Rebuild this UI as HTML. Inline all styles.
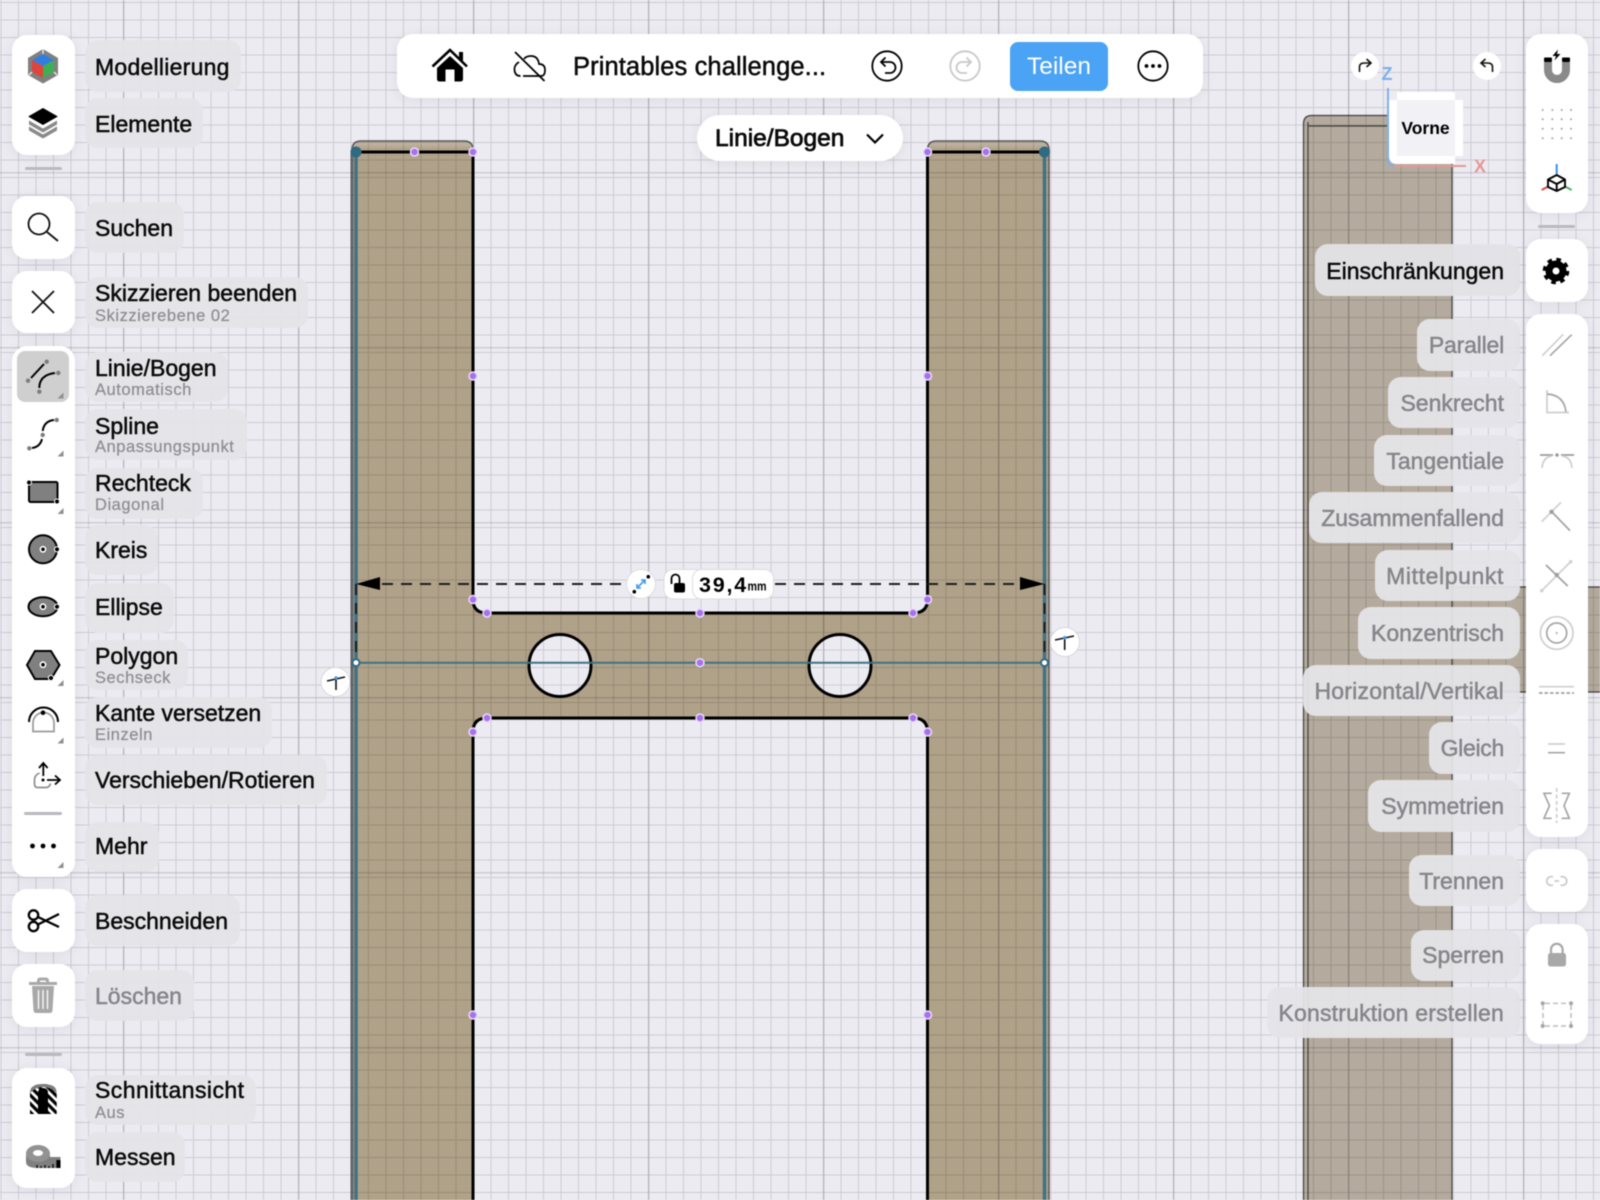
<!DOCTYPE html>
<html lang="de"><head><meta charset="utf-8"><title>Skizze</title>
<style>
html,body{margin:0;padding:0;background:#ecebf2}
body{position:relative;width:1600px;height:1200px;overflow:hidden;font-family:"Liberation Sans",sans-serif;color:#000;filter:blur(.4px)}
svg{position:absolute;left:0;top:0}
.p{position:absolute;background:#fff;border-radius:15px;box-shadow:0 2px 14px rgba(0,0,0,.07)}
.l{position:absolute;background:rgba(228,228,232,.94);border-radius:13px}
.sep{position:absolute;height:3px;background:#b9b9be;border-radius:2px}
.t{position:absolute;height:26px;line-height:26px;font-size:23px;white-space:nowrap;-webkit-text-stroke:.5px currentColor;color:#0a0a0a}
.s{position:absolute;height:20px;line-height:20px;font-size:16.500px;letter-spacing:.55px;white-space:nowrap;color:#8e8e93;-webkit-text-stroke:.25px currentColor}
.g{color:#85858b}
.r{right:96px}
</style></head><body>

<svg width="1600" height="1200" viewBox="0 0 1600 1200">
<defs>
<pattern id="gm" patternUnits="userSpaceOnUse" x="18" y="19.5" width="17.5" height="17.5"><path d="M.5 0V17.5M0 .5H17.5" stroke="#000" stroke-opacity=".135" stroke-width="1" fill="none"/></pattern>
<pattern id="gM" patternUnits="userSpaceOnUse" x="123" y="172" width="175" height="175"><path d="M.75 0V175M0 .75H175" stroke="#000" stroke-opacity=".13" stroke-width="1.500" fill="none"/></pattern>
<linearGradient id="tb" x1="0" y1="0" x2="0" y2="1"><stop offset="0" stop-color="#c4bba9"/><stop offset="1" stop-color="#a99b83"/></linearGradient>
</defs>
<rect width="1600" height="1200" fill="#ecebf2"/>
<!-- right background body -->
<path d="M1303 1200V124q0-9 9-9H1452V587H1600V692H1452V1200Z" fill="#b4ab9e"/>
<path d="M1452 126H1308M1308 1200V122M1303.500 1200V124q0-8.500 8-8.500H1400M1452 126V1200M1452 587H1600M1452 692H1600" stroke="#3f3f3f" stroke-width="1.200" fill="none"/>
<!-- main part -->
<path fill-rule="evenodd" fill="#b0a189" d="M352 1200V150q0-9 9-9H464q9 0 9 9V599.500Q473 613 487 613H913Q927.500 613 927.500 599.500V150q0-9 9-9H1040q9 0 9 9V1200H927.500V732Q927.500 718 913 718H487Q473 718 473 732V1200ZM591 665.500a31 31 0 1 0-62 0a31 31 0 1 0 62 0ZM871 665.500a31 31 0 1 0-62 0a31 31 0 1 0 62 0Z"/>
<path fill="url(#tb)" d="M352 152V150q0-9 9-9H464q9 0 9 9V152ZM927.500 152V150q0-9 9-9H1040q9 0 9 9V152Z"/>
<path d="M352 1200V150q0-9 9-9H464q9 0 9 9M927.500 150q0-9 9-9H1040q9 0 9 9V1200" stroke="#5a5a5c" stroke-width="1.500" fill="none"/>
<path d="M352 1200V150" stroke="#6a6a6e" stroke-width="3" fill="none"/>
<!-- grid -->
<rect width="1600" height="1200" fill="url(#gm)"/>
<rect width="1600" height="1200" fill="url(#gM)"/>
<!-- sketch -->
<g fill="none" stroke="#000" stroke-width="3">
<path d="M356 152H473V599.500Q473 613 487 613H913Q927.500 613 927.500 599.500V152H1044"/>
<path d="M473 1200V732Q473 718 487 718H913Q927.500 718 927.500 732V1200"/>
<circle cx="560" cy="665.500" r="31"/><circle cx="840" cy="665.500" r="31"/>
</g>
<g stroke="#3f7284" fill="none">
<path d="M356 152V1200M1044.500 152V1200" stroke-width="3.500"/>
<path d="M356 662.700H1044.500" stroke-width="2"/>
</g>
<circle cx="356" cy="152" r="5.500" fill="#2f6a80"/><circle cx="1044.500" cy="152" r="5.500" fill="#2f6a80"/>
<!-- dimension -->
<g stroke="#1d1d1d" stroke-width="2" fill="none" stroke-dasharray="11 8">
<path d="M382 584H628"/><path d="M775 584H1020"/>
<path d="M356 584V662"/><path d="M1044.500 584V662"/>
</g>
<path d="M356 584L380 577V590Z M1044.500 584L1020 577V590Z" fill="#000"/>
<!-- dots -->
<g fill="#a970ee" stroke="#e6dcf8" stroke-width="1.500">
<circle cx="414.500" cy="152" r="4"/><circle cx="473" cy="152" r="4"/><circle cx="927.500" cy="152" r="4"/><circle cx="986" cy="152" r="4"/>
<circle cx="473" cy="376" r="4"/><circle cx="927.500" cy="376" r="4"/><circle cx="473" cy="1015" r="4"/><circle cx="927.500" cy="1015" r="4"/>
<circle cx="473" cy="599.500" r="4"/><circle cx="487" cy="613" r="4"/><circle cx="700" cy="613" r="4"/><circle cx="913" cy="613" r="4"/><circle cx="927.500" cy="599.500" r="4"/>
<circle cx="700" cy="662.700" r="4"/>
<circle cx="473" cy="732" r="4"/><circle cx="487" cy="718" r="4"/><circle cx="700" cy="718" r="4"/><circle cx="913" cy="718" r="4"/><circle cx="927.500" cy="732" r="4"/>
</g>
<circle cx="356" cy="662.700" r="3.500" fill="#fff" stroke="#2f6a80" stroke-width="2"/>
<circle cx="1044.500" cy="662.700" r="3.500" fill="#fff" stroke="#2f6a80" stroke-width="2"/>
<!-- T buttons -->
<g fill="#fff" stroke="#d8d8dc" stroke-width="1"><circle cx="335.500" cy="682" r="14.500"/><circle cx="1065" cy="642" r="14.500"/></g>
<g stroke="#111" stroke-width="1.600" fill="none"><path d="M327 681L345 677M336 679V690"/><path d="M1055 640L1074 636M1064.700 638V650"/></g>
<circle cx="336" cy="678" r="1.700" fill="#3d9af0"/><circle cx="1064.700" cy="637.700" r="1.700" fill="#3d9af0"/>
<!-- dim pills -->
<circle cx="641" cy="584" r="14.500" fill="#fff" stroke="#dcdce0"/>
<circle cx="634.300" cy="591.700" r="1.800"/><circle cx="648.300" cy="576.700" r="1.800"/>
<path d="M637 588L645 580M641 580h4v4M637 584v4h4" stroke="#3d9af0" stroke-width="1.600" fill="none"/>
<rect x="664" y="569.500" width="40" height="29.500" rx="9" fill="#fff" stroke="#dcdce0"/>
<rect x="692.500" y="569.500" width="81" height="29.500" rx="9" fill="#fff" stroke="#dcdce0"/>
<rect x="674" y="583" width="11" height="9.500" rx="2" fill="#000"/>
<path d="M671.500 584V578.500a4 4 0 0 1 8 0V583" stroke="#000" stroke-width="1.800" fill="none"/>
<text x="699" y="592" font-family="Liberation Sans" font-weight="700" font-size="21.500" letter-spacing="1.800">39,4</text>
<text x="747.500" y="590.500" font-family="Liberation Sans" font-weight="700" font-size="13" textLength="19" lengthAdjust="spacingAndGlyphs">mm</text>
<!-- view cube -->
<path d="M1388 88V160q0 6 6 6H1466" stroke="#7fb0ea" stroke-width="2" fill="none"/>
<path d="M1394 166H1466" stroke="#e29a96" stroke-width="2" fill="none"/>
<path d="M1397 92H1455V100H1463V156H1455V164H1397q-8 0-8-8V100H1397Z" fill="#fff"/>
<rect x="1397" y="100" width="58" height="56" fill="#f1f1f6"/>
<text x="1425.500" y="134" text-anchor="middle" font-family="Liberation Sans" font-weight="700" font-size="17.500">Vorne</text>
<text x="1387" y="80" text-anchor="middle" font-family="Liberation Sans" font-weight="700" font-size="18" fill="#7fb0ea">Z</text>
<text x="1480" y="172.500" text-anchor="middle" font-family="Liberation Sans" font-weight="700" font-size="18" fill="#e49a96">X</text>
<circle cx="1365" cy="66" r="14" fill="#fff"/><circle cx="1487" cy="66" r="14" fill="#fff"/>
<path d="M1359.500 72V67q0-4 5-4h6M1366.500 59l4.500 4-4.500 4" stroke="#111" stroke-width="1.600" fill="none"/>
<path d="M1492.500 72V67q0-4-5-4h-6M1485.500 59l-4.500 4 4.500 4" stroke="#111" stroke-width="1.600" fill="none"/>
</svg>

<!-- left pills -->
<div class="l" style="left:85px;top:40px;width:156px;height:52px"></div>
<div class="l" style="left:85px;top:98px;width:118px;height:50px"></div>
<div class="l" style="left:85px;top:202px;width:99px;height:51px"></div>
<div class="l" style="left:85px;top:277px;width:223px;height:51px"></div>
<div class="l" style="left:85px;top:352px;width:143px;height:50px"></div>
<div class="l" style="left:85px;top:409px;width:162px;height:51px"></div>
<div class="l" style="left:85px;top:468px;width:118px;height:51px"></div>
<div class="l" style="left:85px;top:525px;width:73px;height:50px"></div>
<div class="l" style="left:85px;top:583px;width:89px;height:50px"></div>
<div class="l" style="left:85px;top:640px;width:103px;height:50px"></div>
<div class="l" style="left:85px;top:697px;width:187px;height:51px"></div>
<div class="l" style="left:85px;top:755px;width:242px;height:50px"></div>
<div class="l" style="left:85px;top:822px;width:74px;height:50px"></div>
<div class="l" style="left:85px;top:895px;width:155px;height:51px"></div>
<div class="l" style="left:85px;top:970px;width:109px;height:51px"></div>
<div class="l" style="left:85px;top:1075px;width:171px;height:50px"></div>
<div class="l" style="left:85px;top:1132px;width:100px;height:50px"></div>
<!-- right pills -->
<div class="l" style="left:1315px;top:244px;width:205px;height:52px;background:rgba(226,226,230,.96)"></div>
<div class="l" style="left:1417px;top:319px;width:103px;height:52px"></div>
<div class="l" style="left:1388px;top:377px;width:132px;height:51px"></div>
<div class="l" style="left:1374px;top:435px;width:146px;height:51px"></div>
<div class="l" style="left:1309px;top:492px;width:211px;height:51px"></div>
<div class="l" style="left:1375px;top:550px;width:145px;height:51px"></div>
<div class="l" style="left:1358px;top:607px;width:162px;height:52px"></div>
<div class="l" style="left:1303px;top:665px;width:217px;height:51px"></div>
<div class="l" style="left:1429px;top:722px;width:91px;height:52px"></div>
<div class="l" style="left:1368px;top:780px;width:152px;height:52px"></div>
<div class="l" style="left:1409px;top:855px;width:111px;height:51px"></div>
<div class="l" style="left:1411px;top:930px;width:109px;height:51px"></div>
<div class="l" style="left:1267px;top:987px;width:253px;height:51px"></div>

<!-- panels -->
<div class="p" style="left:12px;top:35px;width:63px;height:120px"></div>
<div class="sep" style="left:25px;top:167px;width:37px"></div>
<div class="p" style="left:12px;top:196px;width:63px;height:63px"></div>
<div class="p" style="left:12px;top:271px;width:63px;height:62px"></div>
<div class="p" style="left:12px;top:346px;width:63px;height:531px"></div>
<div style="position:absolute;left:17px;top:351px;width:52px;height:51px;background:#cfcfcf;border-radius:8px"></div>
<div class="sep" style="left:24px;top:812px;width:38px"></div>
<div class="p" style="left:12px;top:889px;width:63px;height:63px"></div>
<div class="p" style="left:12px;top:964px;width:63px;height:63px"></div>
<div class="sep" style="left:25px;top:1053px;width:37px"></div>
<div class="p" style="left:12px;top:1068px;width:63px;height:120px"></div>

<div class="p" style="left:1526px;top:34px;width:62px;height:179px"></div>
<div class="sep" style="left:1538px;top:225px;width:37px"></div>
<div class="p" style="left:1526px;top:239px;width:62px;height:63px"></div>
<div class="p" style="left:1526px;top:314px;width:62px;height:523px"></div>
<div class="p" style="left:1526px;top:849px;width:62px;height:63px"></div>
<div class="p" style="left:1526px;top:924px;width:62px;height:120px"></div>

<!-- top bar -->
<div class="p" style="left:397px;top:34px;width:806px;height:64px;border-radius:16px"></div>
<div style="position:absolute;left:1010px;top:42px;width:98px;height:49px;background:#4aa3f5;border-radius:8px;color:#fff;font-size:24.500px;line-height:50px;text-align:center">Teilen</div>
<div class="t" style="left:573px;top:54px;font-size:25.500px;letter-spacing:.1px">Printables challenge...</div>
<div class="p" style="left:697px;top:115px;width:206px;height:46px;border-radius:23px"></div>
<div class="t" style="left:715px;top:126px;font-size:24.500px;-webkit-text-stroke:.75px #0a0a0a">Linie/Bogen</div>

<!-- icons -->
<svg width="1600" height="1200" viewBox="0 0 1600 1200">
<defs>
<pattern id="st" patternUnits="userSpaceOnUse" width="6" height="6" patternTransform="rotate(45 43 1100)"><rect width="6" height="6" fill="#fff"/><rect width="6" height="3.200" fill="#000"/></pattern>
</defs>
<!-- Modellierung -->
<path d="M43 49L58 58V75L43 83.500L28 75V58Z" fill="#808080"/>
<path d="M43 54L54 60L43 66L32 60Z" fill="#2f7fe2"/><path d="M32 60L43 66V78L32 72Z" fill="#e0443a"/><path d="M54 60L43 66V78L54 72Z" fill="#3fae55"/>
<path d="M43 54V49M32 72L29 75M54 72L57 75" stroke="#eee" stroke-width="1.300"/>
<!-- Elemente -->
<path d="M43 108.500L57 116.500L43 124.500L29 116.500Z" fill="#000" stroke="#000" stroke-linejoin="round"/>
<path d="M29 120.500L43 128.500L57 120.500V124.500L43 132.500L29 124.500ZM29 126.500L43 134.500L57 126.500V130.500L43 138.500L29 130.500Z" fill="#8a8a8a"/>
<!-- Suchen -->
<circle cx="39" cy="224" r="10.500" fill="none" stroke="#111" stroke-width="1.800"/><path d="M47 232L58 241" stroke="#111" stroke-width="1.800"/>
<!-- X -->
<path d="M32 291L54 313M54 291L32 313" stroke="#111" stroke-width="1.800"/>
<!-- corner triangles -->
<g fill="#8f8f8f"><path d="M63.500 392.500V398.500H57.500Z"/><path d="M63.500 450.500V456.500H57.500Z"/><path d="M63.500 508V514H57.500Z"/><path d="M63.500 680V686H57.500Z"/><path d="M63.500 737.500V743.500H57.500Z"/><path d="M63.500 862V868H57.500Z"/></g>
<!-- Linie -->
<path d="M31 378L44 364M39.300 388Q39.300 375 55 373" stroke="#000" stroke-width="2" fill="none"/>
<g fill="#7d7d7d"><circle cx="46.700" cy="361.700" r="2.200"/><circle cx="28" cy="380.700" r="2.200"/><circle cx="58.300" cy="373" r="2.200"/><circle cx="39.300" cy="391.700" r="2.200"/></g>
<!-- Spline -->
<path d="M42.700 431Q44 421 54 420M42 439Q40 447 32 448" stroke="#000" stroke-width="2" fill="none"/>
<g fill="#7d7d7d"><circle cx="56.700" cy="420" r="2.200"/><circle cx="42.700" cy="435" r="2.200"/><circle cx="29.300" cy="448.300" r="2.200"/></g>
<!-- Rechteck -->
<rect x="29" y="482" width="28.500" height="20" rx="1.500" fill="#808080" stroke="#000" stroke-width="2"/>
<circle cx="29" cy="482.500" r="2.500" fill="#000" stroke="#fff"/><circle cx="57" cy="501.500" r="2.500" fill="#000" stroke="#fff"/>
<!-- Kreis -->
<circle cx="43" cy="549.300" r="14" fill="#808080" stroke="#000" stroke-width="2"/>
<circle cx="43" cy="549.300" r="2.600" fill="#000" stroke="#fff" stroke-width="1.600"/><circle cx="57" cy="549.300" r="2.600" fill="#000" stroke="#fff"/>
<!-- Ellipse -->
<ellipse cx="43" cy="606.700" rx="14.500" ry="9.500" fill="#808080" stroke="#000" stroke-width="2"/>
<circle cx="43" cy="606.700" r="2.600" fill="#000" stroke="#fff" stroke-width="1.600"/><circle cx="57" cy="606.700" r="2.600" fill="#000" stroke="#fff"/>
<!-- Polygon -->
<path d="M35 651H51L59.500 665L51 679H35L27 665Z" fill="#808080" stroke="#000" stroke-width="2"/>
<circle cx="43" cy="664.700" r="2.600" fill="#000" stroke="#fff" stroke-width="1.600"/><circle cx="51" cy="678" r="2.600" fill="#000" stroke="#fff"/>
<!-- Kante versetzen -->
<path d="M33 731.500H54V723A10.500 10.500 0 0 0 33 723Z" fill="none" stroke="#9a9a9a" stroke-width="1.700"/>
<path d="M29 722A14.500 14.500 0 0 1 58 722" fill="none" stroke="#000" stroke-width="2"/>
<circle cx="43" cy="712.700" r="2.300" fill="#000"/>
<!-- Verschieben -->
<path d="M39.500 773Q34.500 775 34.500 780V784q0 3.500 3.500 3.500H46q3.500 0 4.500-4" fill="none" stroke="#8f8f8f" stroke-width="1.700"/>
<path d="M43.300 776V764M39 768l4.300-5 4.300 5M47 780H59.500M55 775.500l5 4.500-5 4.500" fill="none" stroke="#000" stroke-width="1.800"/>
<circle cx="43" cy="780" r="1.500" fill="#000"/>
<!-- Mehr -->
<circle cx="32.500" cy="846" r="2.400"/><circle cx="43" cy="846" r="2.400"/><circle cx="53.500" cy="846" r="2.400"/>
<!-- Schere -->
<g fill="none" stroke="#000" stroke-width="2.300"><circle cx="33.500" cy="915" r="4.700"/><circle cx="33.500" cy="926.500" r="4.700"/><path d="M38 917L59 927M38 924.500L59 914"/></g>
<!-- Trash -->
<path d="M29 983.500H57M38.500 983.500V981q0-2 2-2h5q2 0 2 2v2.500" stroke="#a8a8a8" stroke-width="3" fill="none"/>
<path d="M32 986H54L52.500 1010q0 3-3 3H36.500q-3 0-3-3Z" fill="#a8a8a8"/>
<path d="M38.500 990V1009M43 990V1009M47.500 990V1009" stroke="#fff" stroke-width="1.300"/>
<!-- Schnitt -->
<path d="M30 1093Q30 1084 43 1084Q56.700 1084 56.700 1093V1114H30Z" fill="url(#st)"/>
<path d="M30 1093Q30 1084 43 1084Q56.700 1084 56.700 1093Q50 1087 43 1087Q36 1087 30 1093Z" fill="#7d7d7d"/>
<path d="M38 1114V1093q0-5 5-5t5 5V1114Z" fill="#000"/>
<!-- Messen -->
<path d="M26 1155V1162q0 6 12 6H60.500V1157H50V1155Z" fill="#808080"/>
<ellipse cx="38" cy="1153.500" rx="12" ry="8.500" fill="#929292"/><ellipse cx="38" cy="1153" rx="5" ry="3" fill="#fff"/>
<path d="M37 1168V1165M41 1168V1166M45 1168V1165M49 1168V1166M53 1168V1164M57 1168V1160" stroke="#000" stroke-width="1.200"/>
<rect x="57" y="1160" width="3.500" height="8" fill="#000"/>

<!-- Home -->
<path d="M432.500 66.500L450 50L467 66.500" fill="none" stroke="#000" stroke-width="2.600"/>
<path d="M459 52h4v9l-4-4Z" fill="#000"/>
<path d="M437 68L450 56L463 68V79q0 2.500-2.500 2.500H439.500q-2.500 0-2.500-2.500ZM445.500 69.500V81.500H454.500V69.500Z" fill="#000" fill-rule="evenodd"/>
<!-- Cloud -->
<path d="M523 76H541q4 0 4-6q0-6-6-6q-1-8-8-8q-5 0-7 3M519 62q-5 3-4.500 8q.5 6 6 6" fill="none" stroke="#000" stroke-width="1.700"/>
<path d="M515 52L544.500 81" stroke="#000" stroke-width="1.800"/>
<!-- Undo/redo/more -->
<circle cx="887" cy="66" r="14.700" fill="none" stroke="#000" stroke-width="1.800"/>
<path d="M881.500 62H890a5.500 5.500 0 0 1 0 11H885M885.500 57.500L881 62L885.500 66.500" fill="none" stroke="#000" stroke-width="1.800"/>
<circle cx="965" cy="66" r="14.700" fill="none" stroke="#c9c9c9" stroke-width="1.800"/>
<path d="M970.500 62H962a5.500 5.500 0 0 0 0 11H967M966.500 57.500L971 62L966.500 66.500" fill="none" stroke="#c9c9c9" stroke-width="1.800"/>
<circle cx="1153" cy="66" r="14.700" fill="none" stroke="#000" stroke-width="1.800"/>
<circle cx="1146.500" cy="66" r="1.900"/><circle cx="1153" cy="66" r="1.900"/><circle cx="1159.500" cy="66" r="1.900"/>
<path d="M867 134.500L875 142.500L883 134.500" fill="none" stroke="#000" stroke-width="2.200"/>

<!-- magnet -->
<path d="M1558 49.500L1552.500 56H1556L1554.500 60.500L1560.500 54H1557Z" fill="#000"/>
<path d="M1548 62V70a9 9 0 0 0 18 0V62" fill="none" stroke="#8a8a8a" stroke-width="8"/>
<rect x="1544" y="57.500" width="8" height="4.500" fill="#000" rx="1"/><rect x="1562" y="57.500" width="8" height="4.500" fill="#000" rx="1"/>
<!-- dots -->
<g fill="#a2a2a2"><circle cx="1542.700" cy="110" r="1"/><circle cx="1552.300" cy="110" r="1"/><circle cx="1561.700" cy="110" r="1"/><circle cx="1571" cy="110" r="1"/><circle cx="1542.700" cy="119.300" r="1"/><circle cx="1552.300" cy="119.300" r="1"/><circle cx="1561.700" cy="119.300" r="1"/><circle cx="1571" cy="119.300" r="1"/><circle cx="1542.700" cy="128.700" r="1"/><circle cx="1552.300" cy="128.700" r="1"/><circle cx="1561.700" cy="128.700" r="1"/><circle cx="1571" cy="128.700" r="1"/><circle cx="1542.700" cy="138.300" r="1"/><circle cx="1552.300" cy="138.300" r="1"/><circle cx="1561.700" cy="138.300" r="1"/><circle cx="1571" cy="138.300" r="1"/></g>
<!-- axes cube -->
<path d="M1556.700 164V174" stroke="#3d8fe8" stroke-width="2"/><path d="M1541.700 190L1548 186.500" stroke="#dc4a42" stroke-width="2"/><path d="M1571.700 190L1565 186.500" stroke="#4bb360" stroke-width="2"/>
<path d="M1556.700 175L1565 179.500V187L1556.700 191L1548 187V179.500ZM1548 179.500L1556.700 184L1565 179.500M1556.700 184V191" fill="none" stroke="#000" stroke-width="1.900" stroke-linejoin="round"/>
<!-- gear -->
<circle cx="1556" cy="271" r="7" fill="none" stroke="#000" stroke-width="7"/>
<circle cx="1556" cy="271" r="11.300" fill="none" stroke="#000" stroke-width="4" stroke-dasharray="4.500 4.376"/>
<!-- constraints -->
<g fill="none" stroke-width="1.700">
<path d="M1542.300 355.700L1563.300 334.300" stroke="#cfcfcf"/><path d="M1550 355.700L1571.700 334.700" stroke="#a6a6a6"/>
<path d="M1569 412.500H1547V390" stroke="#cfcfcf"/><path d="M1547 394Q1564 395 1566 412" stroke="#a6a6a6"/>
<path d="M1540 455H1553M1561 455H1574" stroke="#9c9c9c"/><path d="M1542 468Q1543 457 1552 456M1572 468Q1571 457 1562 456" stroke="#cfcfcf"/>
<path d="M1541.700 521.700L1561 502.300" stroke="#cfcfcf"/><path d="M1551.700 511.700L1570 530.700" stroke="#a0a0a0"/>
<path d="M1541.700 590.700L1570.700 561.700" stroke="#cfcfcf"/><path d="M1546 565L1567.700 586" stroke="#a0a0a0"/>
<circle cx="1556.700" cy="633" r="16.300" stroke="#cfcfcf"/><circle cx="1556.700" cy="633" r="10" stroke="#a6a6a6"/>
<path d="M1539 686.700H1574" stroke="#cfcfcf"/><path d="M1539 693H1574" stroke="#a0a0a0" stroke-dasharray="3.500 2"/>
<path d="M1548 744H1565" stroke="#cfcfcf"/><path d="M1548 752.700H1565" stroke="#a6a6a6"/>
<path d="M1556.700 788V823" stroke="#cfcfcf" stroke-dasharray="4 2.500"/>
<path d="M1551.700 793.300H1544L1549.500 805.700L1544 818.300H1551.700M1561.700 793.300H1569.300L1564 805.700L1569.300 818.300H1561.700" stroke="#a6a6a6"/>
<path d="M1553 876.700H1551a4.300 4.300 0 0 0 0 8.600H1553M1560.500 876.700H1562.500a4.300 4.300 0 0 1 0 8.600H1560.500" stroke="#c8c8c8"/><path d="M1554.500 881H1559" stroke="#c8c8c8"/>
<path d="M1551 953V949.500a5.800 5.800 0 0 1 11.600 0V953" stroke="#a8a8a8" stroke-width="2.200"/>
<path d="M1545 1003.300H1571M1543 1005V1025M1571 1005V1025M1545 1026H1571" stroke="#c4c4c4" stroke-dasharray="5 3"/>
</g>
<circle cx="1551.500" cy="511.800" r="2.200" fill="#a0a0a0"/><circle cx="1556.700" cy="575" r="2.200" fill="#a0a0a0"/><circle cx="1541.700" cy="590.700" r="1.700" fill="#cfcfcf"/><circle cx="1570.700" cy="561.700" r="1.700" fill="#cfcfcf"/>
<circle cx="1556.700" cy="633" r="1.200" fill="#bdbdbd"/><circle cx="1557" cy="455" r="1.800" fill="#9c9c9c"/>
<rect x="1548" y="953" width="18" height="13.500" rx="2.500" fill="#a8a8a8"/>
<g fill="#a6a6a6"><circle cx="1542.700" cy="1003.300" r="2.100"/><circle cx="1571" cy="1003.300" r="2.100"/><circle cx="1542.700" cy="1026" r="2.100"/><circle cx="1571" cy="1026" r="2.100"/></g>
</svg>

<!-- left text -->
<div class="t" style="left:95px;top:54px;letter-spacing:.25px">Modellierung</div>
<div class="t" style="left:95px;top:111px">Elemente</div>
<div class="t" style="left:95px;top:215px">Suchen</div>
<div class="t" style="left:95px;top:280px">Skizzieren beenden</div>
<div class="s" style="left:95px;top:306px">Skizzierebene 02</div>
<div class="t" style="left:95px;top:355px">Linie/Bogen</div>
<div class="s" style="left:95px;top:380px">Automatisch</div>
<div class="t" style="left:95px;top:413px">Spline</div>
<div class="s" style="left:95px;top:437px">Anpassungspunkt</div>
<div class="t" style="left:95px;top:470px">Rechteck</div>
<div class="s" style="left:95px;top:495px">Diagonal</div>
<div class="t" style="left:95px;top:537px">Kreis</div>
<div class="t" style="left:95px;top:594px">Ellipse</div>
<div class="t" style="left:95px;top:643px">Polygon</div>
<div class="s" style="left:95px;top:668px">Sechseck</div>
<div class="t" style="left:95px;top:700px">Kante versetzen</div>
<div class="s" style="left:95px;top:725px">Einzeln</div>
<div class="t" style="left:95px;top:767px">Verschieben/Rotieren</div>
<div class="t" style="left:95px;top:833px">Mehr</div>
<div class="t" style="left:95px;top:908px">Beschneiden</div>
<div class="t g" style="left:95px;top:983px">Löschen</div>
<div class="t" style="left:95px;top:1077px;letter-spacing:.45px">Schnittansicht</div>
<div class="s" style="left:95px;top:1103px">Aus</div>
<div class="t" style="left:95px;top:1144px">Messen</div>
<!-- right text -->
<div class="t r" style="top:258px">Einschränkungen</div>
<div class="t r g" style="top:332px;letter-spacing:-.2px">Parallel</div>
<div class="t r g" style="top:390px">Senkrecht</div>
<div class="t r g" style="top:448px">Tangentiale</div>
<div class="t r g" style="top:505px">Zusammenfallend</div>
<div class="t r g" style="top:563px;letter-spacing:.6px">Mittelpunkt</div>
<div class="t r g" style="top:620px">Konzentrisch</div>
<div class="t r g" style="top:678px;letter-spacing:.22px">Horizontal/Vertikal</div>
<div class="t r g" style="top:735px;letter-spacing:-.3px">Gleich</div>
<div class="t r g" style="top:793px">Symmetrien</div>
<div class="t r g" style="top:868px">Trennen</div>
<div class="t r g" style="top:942px">Sperren</div>
<div class="t r g" style="top:1000px;letter-spacing:.2px">Konstruktion erstellen</div>
</body></html>
